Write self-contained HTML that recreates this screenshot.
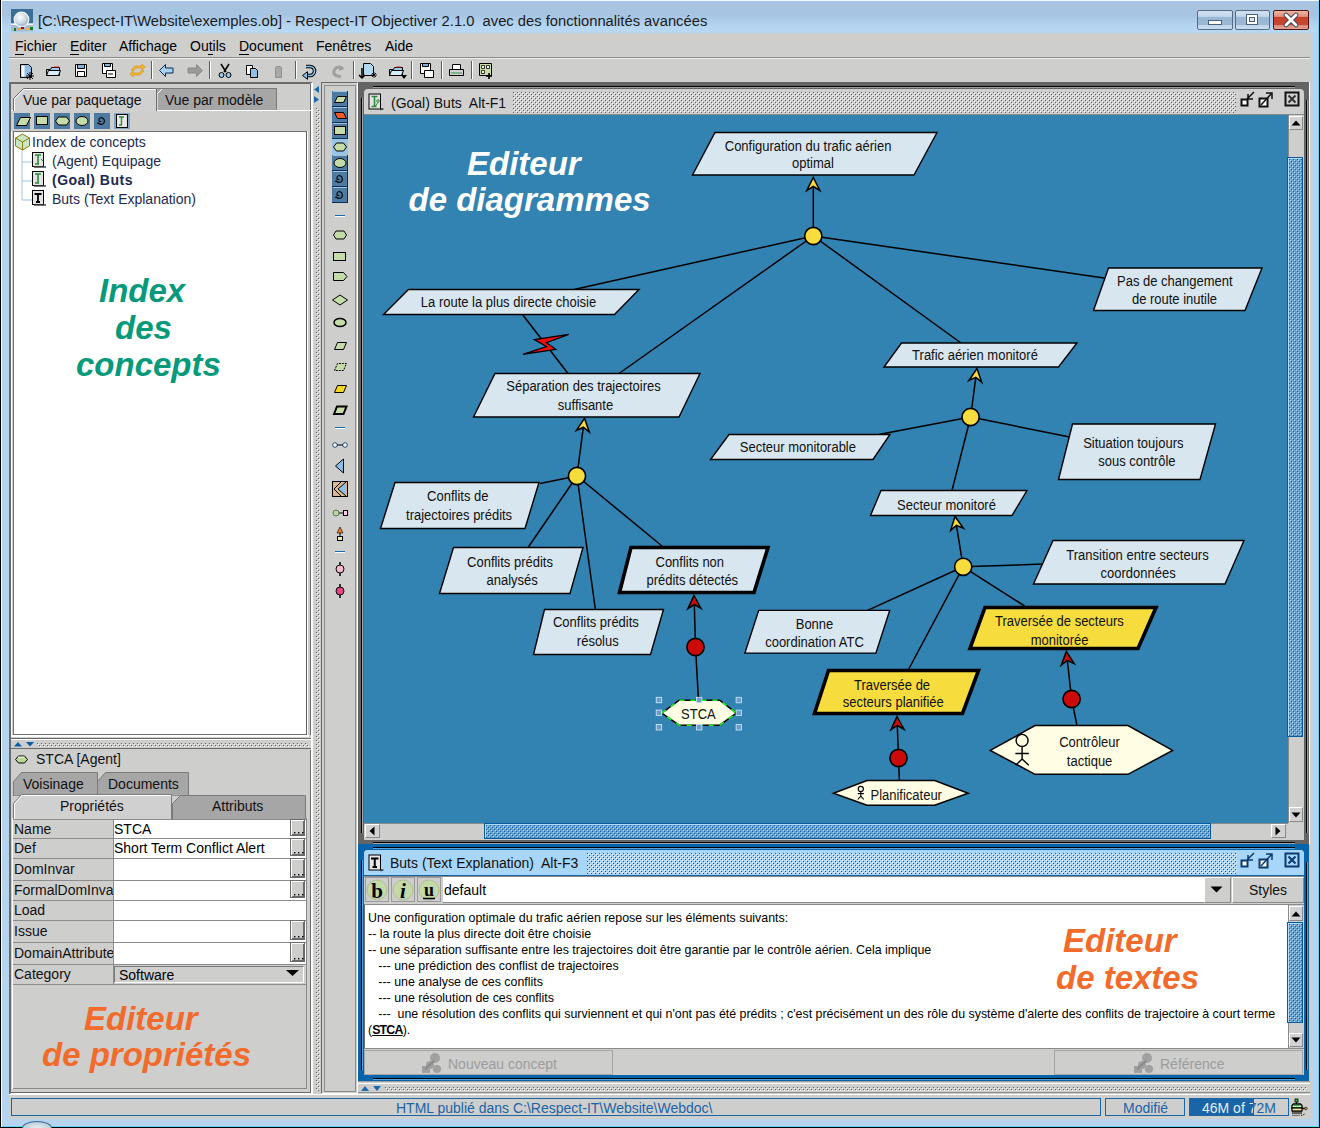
<!DOCTYPE html>
<html><head><meta charset="utf-8">
<style>
*{margin:0;padding:0;box-sizing:border-box}
html,body{width:1320px;height:1128px;overflow:hidden;background:#b6d4ee;font-family:"Liberation Sans",sans-serif;position:relative}
.a{position:absolute}
.t{position:absolute;white-space:pre;line-height:1}
.gray{background:#cececd}
</style></head><body>
<svg width="0" height="0" style="position:absolute"><defs>
<pattern id="gripG" width="4" height="4" patternUnits="userSpaceOnUse"><rect x="0" y="0" width="1" height="1" fill="#5c5c5c"/><rect x="2" y="2" width="1" height="1" fill="#5c5c5c"/><rect x="1" y="1" width="1" height="1" fill="#fff"/><rect x="3" y="3" width="1" height="1" fill="#fff"/></pattern>
<pattern id="gripB" width="4" height="4" patternUnits="userSpaceOnUse"><rect x="0" y="0" width="1" height="1" fill="#0c5aa4"/><rect x="2" y="2" width="1" height="1" fill="#0c5aa4"/><rect x="1" y="1" width="1" height="1" fill="#fff"/><rect x="3" y="3" width="1" height="1" fill="#fff"/></pattern>
<pattern id="thumb" width="4" height="4" patternUnits="userSpaceOnUse"><rect width="4" height="4" fill="#6aa2d2"/><rect x="0" y="0" width="1" height="1" fill="#0a5aa0"/><rect x="2" y="2" width="1" height="1" fill="#0a5aa0"/><rect x="1" y="1" width="1" height="1" fill="#b4dcff"/><rect x="3" y="3" width="1" height="1" fill="#b4dcff"/></pattern>
</defs></svg>
<!-- window frame -->
<div class="a" style="left:0;top:0;width:1320px;height:1128px;background:#b6d4ee"></div>
<div class="a" style="left:0;top:0;width:1320px;height:32px;background:linear-gradient(#a9c4e0,#a6c4e2 45%,#b4d4f0 80%,#b8d8f4)"></div>
<div class="a" style="left:0;top:0;width:1320px;height:1px;background:#f4f8fc"></div>
<div class="a" style="left:0;top:0;width:1px;height:1128px;background:#000"></div>
<div class="a" style="left:1px;top:1px;width:1px;height:1126px;background:#fff"></div>
<div class="a" style="left:1319px;top:0;width:1px;height:1128px;background:#000"></div>
<div class="a" style="left:1318px;top:1px;width:1px;height:1126px;background:#5cd8ff"></div>
<div class="a" style="left:0;top:1127px;width:1320px;height:1px;background:#000"></div>
<div class="a" style="left:2px;top:1126px;width:1316px;height:1px;background:#5cd8ff"></div>
<div class="a" style="left:22px;top:1121px;width:30px;height:14px;border-radius:50%;background:radial-gradient(#e8f0f4,#a8c0d0);border:1px solid #3a6a98"></div>
<!-- title -->
<svg class="a" style="left:10px;top:8px" width="25" height="25">
 <rect x="1" y="1" width="22" height="14.5" fill="#3a6e96"/>
 <rect x="1" y="15.5" width="22" height="1.5" fill="#f0f8ff"/>
 <rect x="1" y="17" width="22" height="6.5" fill="#a8bcd0"/>
 <defs><radialGradient id="glb" cx="40%" cy="35%" r="70%"><stop offset="0" stop-color="#fff"/><stop offset=".6" stop-color="#c8d6e4"/><stop offset="1" stop-color="#8aa4bc"/></radialGradient></defs>
 <circle cx="11.5" cy="11.5" r="7.3" fill="url(#glb)" stroke="#f4f8fc" stroke-width="1.2"/>
 <rect x="7" y="20" width="4" height="2" fill="#f0a050"/><rect x="11" y="19" width="3" height="2" fill="#901020"/><rect x="15" y="20" width="5" height="2" fill="#f0b060"/><rect x="20" y="19" width="3" height="3" fill="#108020"/><rect x="4" y="20" width="2" height="3" fill="#108020"/>
</svg>
<div class="t" style="left:38px;top:14px;font-size:14.75px;color:#1b1b1b">[C:\Respect-IT\Website\exemples.ob] - Respect-IT Objectiver 2.1.0  avec des fonctionnalités avancées</div>
<!-- window buttons -->
<div class="a" style="left:1197px;top:10px;width:36px;height:20px;border:1px solid #5a6a80;border-radius:2px;background:linear-gradient(#cfe0f0,#c4d8ec 30%,#9ab8d4 35%,#9ab8d4 75%,#c0d6ec 80%,#c8dcf0)"></div>
<div class="a" style="left:1208px;top:20px;width:14px;height:5px;background:#fff;border:1px solid #4a5f78"></div>
<div class="a" style="left:1235px;top:10px;width:35px;height:20px;border:1px solid #5a6a80;border-radius:2px;background:linear-gradient(#cfe0f0,#c4d8ec 30%,#9ab8d4 35%,#9ab8d4 75%,#c0d6ec 80%,#c8dcf0)"></div>
<div class="a" style="left:1246px;top:14px;width:12px;height:11px;background:#fff;border:1px solid #4a5f78"></div>
<div class="a" style="left:1249px;top:17px;width:6px;height:5px;border:1px solid #4a5f78;background:#d8e4ee"></div>
<div class="a" style="left:1273px;top:10px;width:36px;height:20px;border:1px solid #4a1810;border-radius:2px;background:linear-gradient(#f0b4a4,#e09080 30%,#c8402c 35%,#c84830 75%,#dc8c7c 80%,#e8a090)"></div>
<svg class="a" style="left:1282px;top:12px" width="18" height="16"><path d="M4 3l10 10M14 3L4 13" stroke="#3a4a5a" stroke-width="4.6" stroke-linecap="round"/><path d="M4 3l10 10M14 3L4 13" stroke="#fff" stroke-width="2.8" stroke-linecap="round"/></svg>

<!-- content gray -->
<div class="a gray" style="left:9px;top:33px;width:1302px;height:1086px"></div>

<!-- menu bar -->
<div class="t" style="left:15px;top:39px;font-size:14px;color:#000">Fichier</div>
<div class="a" style="left:15px;top:54px;width:9px;height:1px;background:#000"></div>
<div class="t" style="left:70px;top:39px;font-size:14px;color:#000">Editer</div>
<div class="a" style="left:70px;top:54px;width:9px;height:1px;background:#000"></div>
<div class="t" style="left:119px;top:39px;font-size:14px;color:#000">Affichage</div>
<div class="t" style="left:190px;top:39px;font-size:14px;color:#000">Outils</div>
<div class="a" style="left:208px;top:54px;width:5px;height:1px;background:#000"></div>
<div class="t" style="left:239px;top:39px;font-size:14px;color:#000">Document</div>
<div class="a" style="left:239px;top:54px;width:10px;height:1px;background:#000"></div>
<div class="t" style="left:316px;top:39px;font-size:14px;color:#000">Fenêtres</div>
<div class="t" style="left:385px;top:39px;font-size:14px;color:#000">Aide</div>
<div class="a" style="left:9px;top:57px;width:1301px;height:1px;background:#8c8c8c"></div>
<div class="a" style="left:9px;top:58px;width:1301px;height:1px;background:#ececec"></div>
<!-- toolbar separators -->
<div class="a" style="left:151px;top:61px;width:1px;height:18px;background:#1f6fb0"></div><div class="a" style="left:152px;top:61px;width:1px;height:18px;background:#fff"></div>
<div class="a" style="left:209px;top:61px;width:1px;height:18px;background:#1f6fb0"></div><div class="a" style="left:210px;top:61px;width:1px;height:18px;background:#fff"></div>
<div class="a" style="left:295px;top:61px;width:1px;height:18px;background:#1f6fb0"></div><div class="a" style="left:296px;top:61px;width:1px;height:18px;background:#fff"></div>
<div class="a" style="left:353px;top:61px;width:1px;height:18px;background:#1f6fb0"></div><div class="a" style="left:354px;top:61px;width:1px;height:18px;background:#fff"></div>
<div class="a" style="left:411px;top:61px;width:1px;height:18px;background:#1f6fb0"></div><div class="a" style="left:412px;top:61px;width:1px;height:18px;background:#fff"></div>
<div class="a" style="left:441px;top:61px;width:1px;height:18px;background:#1f6fb0"></div><div class="a" style="left:442px;top:61px;width:1px;height:18px;background:#fff"></div>
<div class="a" style="left:471px;top:61px;width:1px;height:18px;background:#1f6fb0"></div><div class="a" style="left:472px;top:61px;width:1px;height:18px;background:#fff"></div>
<!-- toolbar icons -->
<svg class="a" style="left:0;top:58px" width="500" height="24" viewBox="0 58 500 24">
 <!-- new -->
 <path d="M20.5 64.5h8l3 3v10h-11z" fill="#8fc0ea" stroke="#000"/>
 <path d="M21.5 65.5h3v11h-3z" fill="#fff"/>
 <path d="M27 73l6 6M33 73l-6 6M30 72v8M26 76h8" stroke="#000" stroke-width="1"/>
 <!-- open -->
 <path d="M46.5 69.5h4l1-2h8v8h-13z" fill="#9ccbee" stroke="#000"/>
 <path d="M46.5 75.5l2-5h12l-2 5z" fill="#d8ecfa" stroke="#000"/>
 <path d="M54 67h5" stroke="#d02020"/>
 <!-- save -->
 <path d="M75.5 64.5h11v12h-11z" fill="#fff" stroke="#000"/>
 <path d="M77.5 64.5h7v4h-7z" fill="#7fb6e6" stroke="#000"/>
 <path d="M77.5 71.5h7v5h-7z" fill="#fff" stroke="#000"/>
 <!-- save all -->
 <path d="M102.5 63.5h10v10h-10z" fill="#fff" stroke="#000"/>
 <path d="M104.5 63.5h6v3h-6z" fill="#7fb6e6" stroke="#000"/>
 <path d="M106.5 70.5h9v7h-9z" fill="#fff" stroke="#000"/>
 <path d="M108 74h5" stroke="#000"/>
 <!-- sync -->
 <path d="M131 70l4-4h7v-2l3 3-3 3v-2h-6l-3 3z" fill="#f2b640" stroke="#d69a20" stroke-width=".8"/>
 <path d="M144 71l-4 4h-7v2l-3-3 3-3v2h6l3-3z" fill="#f2b640" stroke="#d69a20" stroke-width=".8"/>
 <!-- back -->
 <path d="M159.5 70.5l6-6v3.5h7.5v5h-7.5v3.5z" fill="#a8d2f2" stroke="#0a2a50"/>
 <!-- forward gray -->
 <path d="M202.5 70.5l-6-6v3.5h-8.5v5h8.5v3.5z" fill="#9a9a9a" stroke="#8a8a8a"/>
 <!-- cut -->
 <path d="M221 64l5 8M229 64l-5 8" stroke="#000" stroke-width="1.5"/>
 <circle cx="221.5" cy="75" r="2.5" fill="#9cc8ee" stroke="#000"/>
 <circle cx="228.5" cy="75" r="2.5" fill="#9cc8ee" stroke="#000"/>
 <!-- copy -->
 <path d="M246.5 65.5h6v9h-6z" fill="#fff" stroke="#000"/>
 <path d="M250.5 68.5h5l2 2v7h-7z" fill="#8fc0ea" stroke="#000"/>
 <!-- paste gray -->
 <path d="M276.5 66.5h4l1 1v10h-6v-10z" fill="#a8a8a8" stroke="#909090"/>
 <!-- undo -->
 <path d="M306 66.5h4a4.5 4.5 0 0 1 0 9h-3" fill="none" stroke="#000" stroke-width="3.6"/>
 <path d="M306 66.5h4a4.5 4.5 0 0 1 0 9h-3" fill="none" stroke="#8cc4f0" stroke-width="1.6"/>
 <path d="M302.5 75.5l5-3.8v7.6z" fill="#8cc4f0" stroke="#000" stroke-width="1"/>
 <!-- redo gray -->
 <path d="M343 69c-3-3-8-2-9 2s3 6 7 5" fill="none" stroke="#a0a0a0" stroke-width="3"/>
 <path d="M339 65l5 4-5 2z" fill="#a0a0a0"/>
 <!-- import -->
 <path d="M363.5 63.5h7l3 3v9h-10z" fill="#b0d8f0" stroke="#000"/>
 <path d="M362 68v10M359 75l3 3 3-3" stroke="#000" stroke-width="1.5" fill="none"/>
 <path d="M372 73l4 4M376 73l-4 4M374 72v6M371 75h6" stroke="#000" stroke-width=".8"/>
 <!-- export -->
 <path d="M389.5 69.5h4l1-2h8v8h-13z" fill="#9ccbee" stroke="#000"/>
 <path d="M389.5 75.5l2-5h12l-2 5z" fill="#d8ecfa" stroke="#000"/>
 <path d="M396 67h5" stroke="#d02020"/>
 <path d="M401 75l3 4 3-4z" fill="#000"/>
 <!-- save doc -->
 <path d="M420.5 63.5h10v10h-10z" fill="#fff" stroke="#000"/>
 <path d="M422.5 63.5h6v3h-6z" fill="#7fb6e6" stroke="#000"/>
 <path d="M424.5 70.5h9v7h-9z" fill="#fff" stroke="#000"/>
 <!-- print -->
 <path d="M452.5 64.5h8v5h-8z" fill="#fff" stroke="#000"/>
 <path d="M449.5 69.5h14v6h-14z" fill="#d2d2d2" stroke="#000"/>
 <path d="M451 73h11" stroke="#309040"/>
 <!-- graph -->
 <path d="M479.5 63.5h12v12h-12z" fill="#c8e0a8" stroke="#000"/>
 <path d="M481.5 65.5h3v3h-3zM486.5 65.5h3v3h-3zM481.5 70.5h3v3h-3z" fill="#fff" stroke="#000" stroke-width=".8"/>
 <path d="M489 73v6M486 76h6" stroke="#000" stroke-width="1.6"/>
</svg>

<!-- ===== LEFT PANEL ===== -->
<div class="a" style="left:9px;top:82px;width:304px;height:1013px;border-top:2px solid #6a6a6a;border-left:2px solid #6a6a6a;border-right:3px solid #fff;border-bottom:2px solid #fff"></div>
<div class="a" style="left:11px;top:84px;width:300px;height:1009px;border-right:1px solid #6a6a6a;border-bottom:1px solid #6a6a6a"></div>
<!-- tabs -->
<div class="a" style="left:11px;top:110px;width:300px;height:1px;background:#fff"></div>
<div class="a" style="left:157px;top:88px;width:120px;height:22px;background:#a6a6a6;border-top:1px solid #7a7a7a;border-right:1px solid #7a7a7a"></div>
<svg class="a" style="left:150px;top:88px" width="12" height="23"><path d="M7 22V6l6-6" fill="none" stroke="#fff"/></svg>
<div class="t" style="left:165px;top:93px;font-size:14px;color:#111">Vue par modèle</div>
<svg class="a" style="left:13px;top:88px" width="146" height="23"><path d="M0.5 23V10.5L10.5 0.5H143.5V23" fill="#d0d0d0" stroke="#6e6e6e"/><path d="M1.5 23V11L11 1.5H143" fill="none" stroke="#fff"/></svg>
<div class="t" style="left:23px;top:93px;font-size:14px;color:#111">Vue par paquetage</div>
<!-- icon strip -->
<svg class="a" style="left:13px;top:112px" width="120" height="18">
 <rect x="1" y="1" width="16" height="16" fill="#4d7aa0"/>
 <path d="M3.5 13.5l4-8h10l-4 8z" fill="#c4dca8" stroke="#000"/>
 <rect x="21" y="1" width="16" height="16" fill="#4d7aa0"/>
 <rect x="23.5" y="4.5" width="11" height="8" fill="#c4dca8" stroke="#000"/>
 <rect x="41" y="1" width="16" height="16" fill="#4d7aa0"/>
 <path d="M42.5 9l3-4h8l3 4-3 4h-8z" fill="#c4dca8" stroke="#000"/>
 <rect x="61" y="1" width="16" height="16" fill="#4d7aa0"/>
 <ellipse cx="69" cy="9" rx="6" ry="4.5" fill="#c4dca8" stroke="#000"/>
 <rect x="81" y="1" width="16" height="16" fill="#4d7aa0"/>
 <path d="M84.2 11.5l1.3-.6c1 1.6 3.3 2 4.8.7 1.6-1.4 1.4-4.4-.6-5.6-1.7-1-3.8 0-3.8 2 0 1.3 1.5 2 2.4 1.2" fill="none" stroke="#000" stroke-width="1.1"/>
 <rect x="101" y="1" width="16" height="16" fill="#7fa4c4"/>
 <rect x="103.5" y="2.5" width="11" height="13" fill="#e8e8e8" stroke="#000"/>
 <path d="M106 5h5M108.5 5v8M106 13h3" stroke="#2c8a3a" stroke-width="1.4"/>
</svg>
<!-- tree -->
<div class="a" style="left:13px;top:131px;width:295px;height:604px;background:#fff;border:1px solid #707070;border-right-color:#9a9a9a;border-bottom-color:#707070"></div>
<div class="a" style="left:306px;top:131px;width:1px;height:604px;background:#606060"></div><div class="a" style="left:307px;top:131px;width:1px;height:606px;background:#fff"></div>
<svg class="a" style="left:14px;top:132px" width="40" height="80">
 <path d="M1.5 6l7-4 7 4v8l-7 4-7-4z" fill="#c8e8c0" stroke="#8a7a10"/>
 <path d="M1.5 6l7 4 7-4M8.5 10v8" fill="none" stroke="#8a7a10"/>
 <path d="M8 19v49M8 30h10M8 49h10M8 68h10" stroke="#9cc4e4" stroke-width="1"/>
</svg>
<svg class="a" style="left:32px;top:150px" width="22" height="60">
 <rect x="0.5" y="2.5" width="11" height="14" fill="#e4e4e4" stroke="#000"/><path d="M3 5h6M6 5v9M3 14h4" stroke="#2c8a3a" stroke-width="1.6"/><path d="M9 9l2 2" stroke="#2c8a3a"/><path d="M2 17h12" stroke="#444" stroke-width="1.5"/>
 <rect x="0.5" y="21.5" width="11" height="14" fill="#e4e4e4" stroke="#000"/><path d="M3 24h6M6 24v9M3 33h4" stroke="#2c8a3a" stroke-width="1.6"/><path d="M2 36h12" stroke="#444" stroke-width="1.5"/>
 <rect x="0.5" y="40.5" width="11" height="14" fill="#e4e4e4" stroke="#000"/><path d="M2.5 44h7M6 44v8M4 52h4" stroke="#000" stroke-width="1.8"/><path d="M2 55h12" stroke="#444" stroke-width="1.5"/>
</svg>
<div class="t" style="left:32px;top:135px;font-size:14px;color:#1c2a50">Index de concepts</div>
<div class="t" style="left:52px;top:154px;font-size:14px;color:#1c2a50">(Agent) Equipage</div>
<div class="t" style="left:52px;top:173px;font-size:14px;color:#1c2a50;font-weight:bold;letter-spacing:0.5px">(Goal) Buts</div>
<div class="t" style="left:52px;top:192px;font-size:14px;color:#1c2a50">Buts (Text Explanation)</div>
<svg class="a" style="left:0;top:260px" width="300" height="140"><g font-family="Liberation Sans" font-size="33" font-weight="bold" font-style="italic" fill="#079a7a"><text x="99" y="41.8">Index</text><text x="115" y="78.6">des</text><text x="76" y="115.5">concepts</text></g></svg>
<!-- splitter left-bottom -->
<div class="a" style="left:11px;top:735px;width:300px;height:15px;background:#cececd"></div>
<div class="a" style="left:12px;top:735px;width:297px;height:2px;background:#fff"></div>
<div class="a" style="left:11px;top:738px;width:300px;height:1px;background:#6a6a6a"></div>
<div class="a" style="left:11px;top:739px;width:300px;height:1px;background:#fff"></div>
<div class="a" style="left:11px;top:748px;width:300px;height:1px;background:#6a6a6a"></div>
<svg class="a" style="left:37px;top:743px" width="272" height="4"><rect width="272" height="4" fill="url(#gripG)"/></svg>
<svg class="a" style="left:13px;top:740px" width="24" height="9"><path d="M1 6.5l4-4.5 4 4.5z" fill="#0a5ca4"/><path d="M13 2l4 4.5 4-4.5z" fill="#0a5ca4"/></svg>
<div class="a" style="left:11px;top:131px;width:1px;height:606px;background:#fff"></div>

<!-- ===== PROPERTIES ===== -->
<svg class="a" style="left:14px;top:754px" width="16" height="12"><path d="M1.5 5.5l3-3.5h6l3 3.5-3 3.5h-6z" fill="#b8d898" stroke="#000"/><path d="M4 3.2h6.5" stroke="#fff"/></svg>
<div class="t" style="left:36px;top:752px;font-size:14px;color:#111">STCA [Agent]</div>
<!-- tab row 1 -->
<svg class="a" style="left:13px;top:772px" width="180" height="24">
 <path d="M0.5 24V9.5L8.5 0.5H84.5V24z" fill="#a6a6a6" stroke="#7a7a7a"/>
 <path d="M84.5 24V9.5L92.5 0.5H175.5V24z" fill="#a6a6a6" stroke="#7a7a7a"/>
</svg>
<div class="t" style="left:23px;top:777px;font-size:14px;color:#111">Voisinage</div>
<div class="t" style="left:108px;top:777px;font-size:14px;color:#111">Documents</div>
<!-- tab row 2 -->
<svg class="a" style="left:13px;top:794px" width="296" height="25">
 <path d="M159.5 25V9.5L167.5 1.5H292.5V25" fill="#a6a6a6" stroke="#7a7a7a"/>
 <path d="M0.5 25V9.5L8.5 0.5H158.5V25" fill="#d0d0d0" stroke="#7a7a7a"/>
 <path d="M1.5 25V10L9 1.5H158" fill="none" stroke="#fff"/>
</svg>
<div class="t" style="left:60px;top:799px;font-size:14px;color:#111">Propriétés</div>
<div class="t" style="left:212px;top:799px;font-size:14px;color:#111">Attributs</div>
<div class="a" style="left:13px;top:819px;width:294px;height:1px;background:#8c8c8c"></div>
<div class="a" style="left:13px;top:820px;width:100px;height:18px;overflow:hidden"><div class="t" style="left:1px;top:1.5px;font-size:14px;color:#111">Name</div></div>
<div class="a" style="left:114px;top:820px;width:192px;height:18px;background:#fff"></div>
<div class="t" style="left:114px;top:821.5px;font-size:14px;color:#000">STCA</div>
<svg class="a" style="left:290px;top:819px" width="16" height="18"><rect x="0" y="0" width="15" height="17" fill="#6a6a6a"/><rect x="1" y="1" width="13" height="15" fill="#fff"/><rect x="2" y="2" width="12" height="14" fill="#cececd"/><path d="M2 15.5h12M13.5 2v14" stroke="#6a6a6a" stroke-width="1"/><rect x="4" y="13" width="1.4" height="1.4" fill="#000"/><rect x="8" y="13" width="1.4" height="1.4" fill="#000"/><rect x="12" y="13" width="1.4" height="1.4" fill="#000"/></svg>
<div class="a" style="left:13px;top:838px;width:294px;height:1px;background:#8c8c8c"></div>
<div class="a" style="left:13px;top:839px;width:100px;height:19px;overflow:hidden"><div class="t" style="left:1px;top:2.0px;font-size:14px;color:#111">Def</div></div>
<div class="a" style="left:114px;top:839px;width:192px;height:19px;background:#fff"></div>
<div class="t" style="left:114px;top:841.0px;font-size:14px;color:#000">Short Term Conflict Alert</div>
<svg class="a" style="left:290px;top:838px" width="16" height="19"><rect x="0" y="0" width="15" height="18" fill="#6a6a6a"/><rect x="1" y="1" width="13" height="16" fill="#fff"/><rect x="2" y="2" width="12" height="15" fill="#cececd"/><path d="M2 16.5h12M13.5 2v15" stroke="#6a6a6a" stroke-width="1"/><rect x="4" y="14" width="1.4" height="1.4" fill="#000"/><rect x="8" y="14" width="1.4" height="1.4" fill="#000"/><rect x="12" y="14" width="1.4" height="1.4" fill="#000"/></svg>
<div class="a" style="left:13px;top:858px;width:294px;height:1px;background:#8c8c8c"></div>
<div class="a" style="left:13px;top:859px;width:100px;height:21px;overflow:hidden"><div class="t" style="left:1px;top:3.0px;font-size:14px;color:#111">DomInvar</div></div>
<div class="a" style="left:114px;top:859px;width:192px;height:21px;background:#fff"></div>
<svg class="a" style="left:290px;top:858px" width="16" height="21"><rect x="0" y="0" width="15" height="20" fill="#6a6a6a"/><rect x="1" y="1" width="13" height="18" fill="#fff"/><rect x="2" y="2" width="12" height="17" fill="#cececd"/><path d="M2 18.5h12M13.5 2v17" stroke="#6a6a6a" stroke-width="1"/><rect x="4" y="16" width="1.4" height="1.4" fill="#000"/><rect x="8" y="16" width="1.4" height="1.4" fill="#000"/><rect x="12" y="16" width="1.4" height="1.4" fill="#000"/></svg>
<div class="a" style="left:13px;top:880px;width:294px;height:1px;background:#8c8c8c"></div>
<div class="a" style="left:13px;top:881px;width:100px;height:19px;overflow:hidden"><div class="t" style="left:1px;top:2.0px;font-size:14px;color:#111">FormalDomInva</div></div>
<div class="a" style="left:114px;top:881px;width:192px;height:19px;background:#fff"></div>
<svg class="a" style="left:290px;top:880px" width="16" height="19"><rect x="0" y="0" width="15" height="18" fill="#6a6a6a"/><rect x="1" y="1" width="13" height="16" fill="#fff"/><rect x="2" y="2" width="12" height="15" fill="#cececd"/><path d="M2 16.5h12M13.5 2v15" stroke="#6a6a6a" stroke-width="1"/><rect x="4" y="14" width="1.4" height="1.4" fill="#000"/><rect x="8" y="14" width="1.4" height="1.4" fill="#000"/><rect x="12" y="14" width="1.4" height="1.4" fill="#000"/></svg>
<div class="a" style="left:13px;top:900px;width:294px;height:1px;background:#8c8c8c"></div>
<div class="a" style="left:13px;top:901px;width:100px;height:19px;overflow:hidden"><div class="t" style="left:1px;top:2.0px;font-size:14px;color:#111">Load</div></div>
<div class="a" style="left:114px;top:901px;width:192px;height:19px;background:#fff"></div>
<div class="a" style="left:13px;top:920px;width:294px;height:1px;background:#8c8c8c"></div>
<div class="a" style="left:13px;top:921px;width:100px;height:21px;overflow:hidden"><div class="t" style="left:1px;top:3.0px;font-size:14px;color:#111">Issue</div></div>
<div class="a" style="left:114px;top:921px;width:192px;height:21px;background:#fff"></div>
<svg class="a" style="left:290px;top:920px" width="16" height="21"><rect x="0" y="0" width="15" height="20" fill="#6a6a6a"/><rect x="1" y="1" width="13" height="18" fill="#fff"/><rect x="2" y="2" width="12" height="17" fill="#cececd"/><path d="M2 18.5h12M13.5 2v17" stroke="#6a6a6a" stroke-width="1"/><rect x="4" y="16" width="1.4" height="1.4" fill="#000"/><rect x="8" y="16" width="1.4" height="1.4" fill="#000"/><rect x="12" y="16" width="1.4" height="1.4" fill="#000"/></svg>
<div class="a" style="left:13px;top:942px;width:294px;height:1px;background:#8c8c8c"></div>
<div class="a" style="left:13px;top:943px;width:100px;height:21px;overflow:hidden"><div class="t" style="left:1px;top:3.0px;font-size:14px;color:#111">DomainAttribute</div></div>
<div class="a" style="left:114px;top:943px;width:192px;height:21px;background:#fff"></div>
<svg class="a" style="left:290px;top:942px" width="16" height="21"><rect x="0" y="0" width="15" height="20" fill="#6a6a6a"/><rect x="1" y="1" width="13" height="18" fill="#fff"/><rect x="2" y="2" width="12" height="17" fill="#cececd"/><path d="M2 18.5h12M13.5 2v17" stroke="#6a6a6a" stroke-width="1"/><rect x="4" y="16" width="1.4" height="1.4" fill="#000"/><rect x="8" y="16" width="1.4" height="1.4" fill="#000"/><rect x="12" y="16" width="1.4" height="1.4" fill="#000"/></svg>
<div class="a" style="left:13px;top:964px;width:294px;height:1px;background:#8c8c8c"></div>
<div class="a" style="left:13px;top:965px;width:100px;height:19px;overflow:hidden"><div class="t" style="left:1px;top:2.0px;font-size:14px;color:#111">Category</div></div>
<div class="a" style="left:13px;top:984px;width:294px;height:1px;background:#8c8c8c"></div>
<div class="a" style="left:113px;top:819px;width:1px;height:166px;background:#8c8c8c"></div>
<div class="a" style="left:114px;top:966px;width:190px;height:17px;background:#cececd;border:1px solid #7a7a7a;border-right-color:#fff;border-bottom-color:#fff"></div>
<div class="t" style="left:119px;top:968px;font-size:14px;color:#000">Software</div>
<svg class="a" style="left:286px;top:969px" width="14" height="8"><path d="M0 1h13l-6.5 6z" fill="#000"/></svg>
<div class="a" style="left:306px;top:818px;width:1px;height:271px;background:#8a8a8a"></div>
<div class="a" style="left:13px;top:1088px;width:294px;height:1px;background:#8a8a8a"></div>
<div class="a" style="left:12px;top:818px;width:1px;height:271px;background:#fff"></div>
<svg class="a" style="left:0;top:990px" width="300" height="90"><g font-family="Liberation Sans" font-size="33" font-weight="bold" font-style="italic" fill="#f26b2b"><text x="84" y="39.8">Editeur</text><text x="42" y="76.4">de propriétés</text></g></svg>

<!-- ===== splitter left ===== -->
<svg class="a" style="left:316px;top:108px" width="4" height="983"><rect width="4" height="983" fill="url(#gripG)"/></svg>
<svg class="a" style="left:312px;top:85px" width="9" height="20"><path d="M7 1v7l-5-3.5z" fill="#1a6ab0"/><path d="M2 11v7l5-3.5z" fill="#1a6ab0"/></svg>
<!-- ===== palette ===== -->
<div class="a" style="left:321px;top:82px;width:37px;height:1012px;border:1px solid #6a6a6a;border-right-color:#fff;border-bottom-color:#fff"></div>
<div class="a" style="left:324px;top:85px;width:32px;height:1007px;border:1px solid #8c8c8c"></div>

<svg class="a" style="left:324px;top:86px" width="32" height="520">
 <g transform="translate(-324,-86)">
 <rect x="332" y="91" width="16" height="112" fill="#4d7aa0"/>
 <path d="M332 106.5h16M332 122.5h16M332 138.5h16M332 154.5h16M332 170.5h16M332 186.5h16M332 202.5h16M347.5 91v112" stroke="#0e2e5a"/><path d="M333 91.5h14M333 107.5h14M333 123.5h14M333 155.5h14M333 171.5h14M333 187.5h14" stroke="#b8d4ec" stroke-width=".8"/>
 <rect x="332" y="139" width="16" height="16" fill="#9cc4e4"/>
 <path d="M334.5 102.5l3-6h9l-3 6z" fill="#c4dca8" stroke="#000"/>
 <path d="M334.5 112.5l9 0 3 6h-9z" fill="#f05a28" stroke="#000"/>
 <rect x="334.5" y="126.5" width="11" height="8" fill="#c4dca8" stroke="#000"/>
 <path d="M333.5 147l3-4h7l3 4-3 4h-7z" fill="#c4dca8" stroke="#000"/>
 <ellipse cx="340" cy="163" rx="6" ry="4.5" fill="#c4dca8" stroke="#000"/>
 <path d="M335.2 181.5l1.3-.6c1 1.6 3.3 2 4.8.7 1.6-1.4 1.4-4.4-.6-5.6-1.7-1-3.8 0-3.8 2 0 1.3 1.5 2 2.4 1.2" fill="none" stroke="#000" stroke-width="1.1"/>
 <path d="M335.2 197.5l1.3-.6c1 1.6 3.3 2 4.8.7 1.6-1.4 1.4-4.4-.6-5.6-1.7-1-3.8 0-3.8 2 0 1.3 1.5 2 2.4 1.2" fill="none" stroke="#000" stroke-width="1.1"/>
 <path d="M335 215.5h10" stroke="#1a6ab0"/><path d="M335 216.5h10" stroke="#fff"/>
 <path d="M333.5 235l2.5-4h8l2.5 4-2.5 4h-8z" fill="#c4dca8" stroke="#000"/>
 <rect x="333.5" y="252.5" width="12" height="8" fill="#c4dca8" stroke="#000"/>
 <path d="M333.5 272.5h10l3.5 4-3.5 4h-10z" fill="#c4dca8" stroke="#000"/>
 <path d="M332.5 300l7.5-5 7.5 5-7.5 5z" fill="#c4dca8" stroke="#000"/>
 <ellipse cx="340" cy="322.5" rx="6" ry="4" fill="#c4dca8" stroke="#000" stroke-width="1.5"/>
 <path d="M334.5 349.5l3-7h9l-3 7z" fill="#c4dca8" stroke="#000"/>
 <path d="M334.5 370.5l3-7h9l-3 7z" fill="#c4dca8" stroke="#000" stroke-dasharray="2 1"/>
 <path d="M334.5 392.5l3-7h9l-3 7z" fill="#f2d820" stroke="#000"/>
 <path d="M334 414l3-7.5h9.5l-3 7.5z" fill="#c4dca8" stroke="#000" stroke-width="2"/>
 <path d="M335 427.5h10" stroke="#1a6ab0"/><path d="M335 428.5h10" stroke="#fff"/>
 <circle cx="335" cy="445" r="2.3" fill="#fff" stroke="#1a4a7a"/><circle cx="345" cy="445" r="2.3" fill="#fff" stroke="#1a4a7a"/><path d="M337 445h6" stroke="#000"/>
 <path d="M343.5 459v14l-8-7z" fill="#8cc0ec" stroke="#000"/>
 <rect x="332.5" y="481.5" width="15" height="15" fill="#d8b888" stroke="#000"/><path d="M346 482l-8 7 8 7" fill="#8cc0ec" stroke="#000"/><path d="M341 482l-7 7 7 7" fill="none" stroke="#000"/>
 <circle cx="336" cy="513" r="3" fill="#b8d898" stroke="#5a7a5a"/><path d="M339 513h4" stroke="#000"/><rect x="343.5" y="510.5" width="4" height="5" fill="#fce" stroke="#000"/>
 <path d="M340 527l-3 6h6z" fill="#f07a20" stroke="#000" stroke-width=".6"/><path d="M340 533v3" stroke="#000"/><rect x="337.5" y="536.5" width="5" height="4" fill="#f8e8a0" stroke="#000"/>
 <path d="M335 551.5h10" stroke="#1a6ab0"/><path d="M335 552.5h10" stroke="#fff"/>
 <path d="M340 562v3M340 573v3" stroke="#000" stroke-width="1.5"/><circle cx="340" cy="569" r="4" fill="#f8b8d0" stroke="#000"/>
 <path d="M340 584v3M340 595v3" stroke="#000" stroke-width="1.5"/><circle cx="340" cy="591" r="4" fill="#e84888" stroke="#000"/>
 </g>
</svg>

<!-- ===== DIAGRAM FRAME ===== -->
<div class="a" style="left:358px;top:82px;width:951px;height:763px;background:#646464"></div>
<div class="a" style="left:373px;top:86px;width:922px;height:1px;background:#000"></div>
<div class="a" style="left:373px;top:87px;width:922px;height:1px;background:#a0a0a0"></div>
<div class="a" style="left:361px;top:98px;width:1px;height:735px;background:#000"></div>
<div class="a" style="left:362px;top:98px;width:1px;height:735px;background:#a0a0a0"></div>
<div class="a" style="left:1306px;top:100px;width:1px;height:733px;background:#000"></div>
<div class="a" style="left:1307px;top:100px;width:1px;height:733px;background:#a0a0a0"></div>
<div class="a" style="left:373px;top:842px;width:922px;height:1px;background:#000"></div>
<div class="a" style="left:373px;top:843px;width:922px;height:1px;background:#a0a0a0"></div>
<div class="a" style="left:1309px;top:82px;width:1px;height:763px;background:#fff"></div>
<div class="a" style="left:364px;top:89px;width:940px;height:751px;background:#d0d0d0;border-radius:4px 4px 0 0"></div>
<svg class="a" style="left:513px;top:92px" width="723" height="21"><rect width="723" height="21" fill="url(#gripG)"/></svg>
<div class="a" style="left:364px;top:114px;width:940px;height:1px;background:#8a8a8a"></div>
<svg class="a" style="left:368px;top:93px" width="18" height="18">
 <rect x="1" y="1" width="11.5" height="15" fill="#e4e4e4" stroke="#000" stroke-width="1"/>
 <path d="M3.5 3.5h6M6.5 3.5v10M3.5 13.5h5" stroke="#2c8a3a" stroke-width="1.6"/><circle cx="10" cy="8" r="1.3" fill="none" stroke="#2c8a3a"/><path d="M10 9.5l-3 4" stroke="#2c8a3a"/>
 <path d="M12.5 15.5l3 0.5-3 .8" stroke="#444" stroke-width="1.2"/>
</svg>
<div class="t" style="left:391px;top:96px;font-size:14px;color:#111">(Goal) Buts  Alt-F1</div>
<svg class="a" style="left:1240px;top:91px" width="62" height="18">
 <rect x="1.5" y="8.5" width="6" height="6" fill="#fff" stroke="#111" stroke-width="2"/>
 <path d="M7 8l7-7M8 3v5h5" fill="none" stroke="#111" stroke-width="1.5"/>
 <rect x="19.5" y="7.5" width="8" height="8" fill="#fff" stroke="#111" stroke-width="2"/>
 <path d="M21 14l10-11M26 2h6v6" fill="none" stroke="#111" stroke-width="1.5"/>
 <rect x="45.5" y="1.5" width="13" height="13" fill="#d0d0d0" stroke="#111" stroke-width="2"/>
 <path d="M48.5 4.5l7 7M55.5 4.5l-7 7" stroke="#333" stroke-width="2"/>
</svg>
<!-- canvas -->
<div class="a" style="left:364px;top:115px;width:924px;height:708px;background:#3282b2"></div>
<!-- DIAGRAM START --><svg class="a" style="left:364px;top:115px" width="924" height="708" viewBox="364 115 924 708"><line x1="813.3" y1="236.0" x2="574.0" y2="289.5" stroke="#000" stroke-width="1.5"/>
<line x1="813.3" y1="236.0" x2="619.0" y2="373.5" stroke="#000" stroke-width="1.5"/>
<line x1="813.3" y1="236.0" x2="961.0" y2="343.0" stroke="#000" stroke-width="1.5"/>
<line x1="813.3" y1="236.0" x2="1104.0" y2="278.0" stroke="#000" stroke-width="1.5"/>
<line x1="522.5" y1="314.5" x2="568.0" y2="373.5" stroke="#000" stroke-width="1.5"/>
<line x1="577.0" y1="476.0" x2="540.0" y2="483.5" stroke="#000" stroke-width="1.5"/>
<line x1="577.0" y1="476.0" x2="528.4" y2="547.0" stroke="#000" stroke-width="1.5"/>
<line x1="577.0" y1="476.0" x2="595.3" y2="609.0" stroke="#000" stroke-width="1.5"/>
<line x1="577.0" y1="476.0" x2="662.0" y2="546.0" stroke="#000" stroke-width="1.5"/>
<line x1="695.5" y1="647.0" x2="698.5" y2="700.2" stroke="#000" stroke-width="1.5"/>
<line x1="970.6" y1="417.0" x2="878.8" y2="434.5" stroke="#000" stroke-width="1.5"/>
<line x1="970.6" y1="417.0" x2="1069.7" y2="437.0" stroke="#000" stroke-width="1.5"/>
<line x1="970.6" y1="417.0" x2="952.0" y2="490.5" stroke="#000" stroke-width="1.5"/>
<line x1="963.2" y1="566.8" x2="1043.0" y2="564.0" stroke="#000" stroke-width="1.5"/>
<line x1="963.2" y1="566.8" x2="867.6" y2="610.4" stroke="#000" stroke-width="1.5"/>
<line x1="963.2" y1="566.8" x2="1024.6" y2="606.0" stroke="#000" stroke-width="1.5"/>
<line x1="963.2" y1="566.8" x2="908.8" y2="669.0" stroke="#000" stroke-width="1.5"/>
<line x1="898.5" y1="758.0" x2="899.4" y2="780.6" stroke="#000" stroke-width="1.5"/>
<line x1="1071.6" y1="699.0" x2="1077.0" y2="725.6" stroke="#000" stroke-width="1.5"/>
<line x1="813.3" y1="236.0" x2="813.3" y2="186.5" stroke="#000" stroke-width="1.5"/>
<polygon points="813.3,177.5 819.8,190.5 813.3,186.5 806.8,190.5" fill="#f6dc3c" stroke="#000" stroke-width="1.5" stroke-linejoin="miter"/>
<line x1="577.0" y1="476.0" x2="583.3" y2="427.2" stroke="#000" stroke-width="1.5"/>
<polygon points="584.5,418.3 589.3,432.0 583.3,427.2 576.4,430.4" fill="#f6dc3c" stroke="#000" stroke-width="1.5" stroke-linejoin="miter"/>
<line x1="970.6" y1="417.0" x2="975.8" y2="377.4" stroke="#000" stroke-width="1.5"/>
<polygon points="977.0,368.5 981.7,382.2 975.8,377.4 968.9,380.5" fill="#f6dc3c" stroke="#000" stroke-width="1.5" stroke-linejoin="miter"/>
<line x1="963.2" y1="566.8" x2="956.4" y2="525.4" stroke="#000" stroke-width="1.5"/>
<polygon points="955.0,516.5 963.5,528.3 956.4,525.4 950.7,530.4" fill="#f6dc3c" stroke="#000" stroke-width="1.5" stroke-linejoin="miter"/>
<line x1="695.5" y1="647.0" x2="694.3" y2="604.5" stroke="#000" stroke-width="1.5"/>
<polygon points="694.0,595.5 700.9,608.3 694.3,604.5 687.9,608.7" fill="#cc0a0a" stroke="#000" stroke-width="1.5" stroke-linejoin="miter"/>
<line x1="898.5" y1="758.0" x2="897.3" y2="725.5" stroke="#000" stroke-width="1.5"/>
<polygon points="897.0,716.5 904.0,729.3 897.3,725.5 891.0,729.7" fill="#cc0a0a" stroke="#000" stroke-width="1.5" stroke-linejoin="miter"/>
<line x1="1071.6" y1="699.0" x2="1067.3" y2="660.4" stroke="#000" stroke-width="1.5"/>
<polygon points="1066.3,651.5 1074.2,663.7 1067.3,660.4 1061.3,665.1" fill="#cc0a0a" stroke="#000" stroke-width="1.5" stroke-linejoin="miter"/>
<polygon points="715.0,132.5 937.0,132.5 914.0,175.0 692.5,175.0" fill="#d7e6ef" stroke="#000" stroke-width="1.4" stroke-linejoin="miter"/>
<polygon points="408.5,289.5 639.0,289.5 614.5,314.5 383.5,314.5" fill="#d7e6ef" stroke="#000" stroke-width="1.4" stroke-linejoin="miter"/>
<polygon points="495.0,373.5 700.0,373.5 679.0,417.0 473.5,417.0" fill="#d7e6ef" stroke="#000" stroke-width="1.4" stroke-linejoin="miter"/>
<polygon points="1108.5,268.0 1262.0,268.0 1245.0,310.5 1093.5,310.5" fill="#d7e6ef" stroke="#000" stroke-width="1.4" stroke-linejoin="miter"/>
<polygon points="901.5,343.0 1077.0,343.0 1058.5,367.0 884.0,367.0" fill="#d7e6ef" stroke="#000" stroke-width="1.4" stroke-linejoin="miter"/>
<polygon points="729.0,434.5 890.0,434.5 873.0,459.5 710.5,459.5" fill="#d7e6ef" stroke="#000" stroke-width="1.4" stroke-linejoin="miter"/>
<polygon points="1072.5,424.0 1215.5,424.0 1200.0,479.5 1058.5,479.5" fill="#d7e6ef" stroke="#000" stroke-width="1.4" stroke-linejoin="miter"/>
<polygon points="881.0,490.5 1027.0,490.5 1012.0,515.5 870.5,515.5" fill="#d7e6ef" stroke="#000" stroke-width="1.4" stroke-linejoin="miter"/>
<polygon points="395.0,482.5 539.0,482.5 525.0,528.5 380.5,528.5" fill="#d7e6ef" stroke="#000" stroke-width="1.4" stroke-linejoin="miter"/>
<polygon points="453.5,547.5 583.0,547.5 570.0,593.5 439.5,593.5" fill="#d7e6ef" stroke="#000" stroke-width="1.4" stroke-linejoin="miter"/>
<polygon points="544.5,609.5 663.5,609.5 650.5,654.5 533.5,654.5" fill="#d7e6ef" stroke="#000" stroke-width="1.4" stroke-linejoin="miter"/>
<polygon points="631.0,547.5 768.0,547.5 754.0,592.5 619.5,592.5" fill="#d7e6ef" stroke="#000" stroke-width="3.6" stroke-linejoin="miter"/>
<polygon points="1053.0,540.5 1244.0,540.5 1225.0,584.0 1033.5,584.0" fill="#d7e6ef" stroke="#000" stroke-width="1.4" stroke-linejoin="miter"/>
<polygon points="758.7,610.4 889.7,610.4 875.9,653.1 744.9,653.1" fill="#d7e6ef" stroke="#000" stroke-width="1.4" stroke-linejoin="miter"/>
<polygon points="985.0,607.5 1156.0,607.5 1138.0,648.5 970.0,648.5" fill="#f6dc3c" stroke="#000" stroke-width="3.6" stroke-linejoin="miter"/>
<polygon points="828.5,670.5 978.5,670.5 962.5,713.5 814.5,713.5" fill="#f6dc3c" stroke="#000" stroke-width="3.6" stroke-linejoin="miter"/>
<polygon points="661.7,713.1 679.2,700.2 719.7,700.2 736.4,713.1 719.7,725.2 679.2,725.2" fill="#fffde4" stroke="#000" stroke-width="1.6"/>
<polygon points="661.7,713.1 679.2,700.2 719.7,700.2 736.4,713.1 719.7,725.2 679.2,725.2" fill="none" stroke="#22ee22" stroke-width="1.6" stroke-dasharray="5 6"/>
<polygon points="833.5,793.3 867.0,780.6 934.7,780.6 968.2,793.3 934.7,805.2 867.0,805.2" fill="#fffde4" stroke="#000" stroke-width="1.5"/>
<polygon points="990.3,750.4 1035.0,725.6 1128.0,725.6 1172.6,750.4 1128.0,774.3 1035.0,774.3" fill="#fffde4" stroke="#000" stroke-width="1.5"/>
<circle cx="813.3" cy="236" r="8.6" fill="#f6dc3c" stroke="#000" stroke-width="1.6"/>
<circle cx="577" cy="476" r="8.6" fill="#f6dc3c" stroke="#000" stroke-width="1.6"/>
<circle cx="970.6" cy="417" r="8.6" fill="#f6dc3c" stroke="#000" stroke-width="1.6"/>
<circle cx="963.2" cy="566.8" r="8.6" fill="#f6dc3c" stroke="#000" stroke-width="1.6"/>
<circle cx="695.5" cy="647" r="8.6" fill="#cc0a0a" stroke="#000" stroke-width="1.6"/>
<circle cx="898.5" cy="758" r="8.6" fill="#cc0a0a" stroke="#000" stroke-width="1.6"/>
<circle cx="1071.6" cy="699" r="8.6" fill="#cc0a0a" stroke="#000" stroke-width="1.6"/>
<polygon points="568.7,334.4 534.4,339.5 546.5,346.5 523.0,354.4 555.7,349.3 546.5,342.7" fill="#ee1010" stroke="#000" stroke-width="1.3" stroke-linejoin="miter"/>
<g fill="none" stroke="#000" stroke-width="1.4"><circle cx="1022.1" cy="740.4" r="6"/><path d="M1022.1 746.5v12.5M1015.4 753.5h13.4M1015.7 765.3l6.4-6.3 6.7 6.3"/></g>
<g fill="none" stroke="#000" stroke-width="1.1"><circle cx="860.8" cy="789" r="2.6"/><path d="M860.8 791.6v4.5M857.8 793.6h6M857.8 799.5l3-3.4 3 3.4"/></g>
<rect x="656.2" y="697.3" width="5.5" height="5.5" fill="#6a9ccc" stroke="#d4ecff" stroke-width="0.8"/>
<rect x="656.2" y="710.1" width="5.5" height="5.5" fill="#6a9ccc" stroke="#d4ecff" stroke-width="0.8"/>
<rect x="656.2" y="724.5" width="5.5" height="5.5" fill="#6a9ccc" stroke="#d4ecff" stroke-width="0.8"/>
<rect x="696.4" y="697.3" width="5.5" height="5.5" fill="#6a9ccc" stroke="#d4ecff" stroke-width="0.8"/>
<rect x="696.4" y="724.5" width="5.5" height="5.5" fill="#6a9ccc" stroke="#d4ecff" stroke-width="0.8"/>
<rect x="736.1" y="697.3" width="5.5" height="5.5" fill="#6a9ccc" stroke="#d4ecff" stroke-width="0.8"/>
<rect x="736.1" y="710.1" width="5.5" height="5.5" fill="#6a9ccc" stroke="#d4ecff" stroke-width="0.8"/>
<rect x="736.1" y="724.5" width="5.5" height="5.5" fill="#6a9ccc" stroke="#d4ecff" stroke-width="0.8"/>
<g font-family="Liberation Sans" font-size="13" fill="#111" text-anchor="middle"><text x="808.1" y="151.2" transform="matrix(1 0 0 1.06 0 -9.07)">Configuration du trafic aérien</text><text x="813" y="168.2" transform="matrix(1 0 0 1.06 0 -10.09)">optimal</text><text x="508.5" y="307.5" transform="matrix(1 0 0 1.06 0 -18.45)">La route la plus directe choisie</text><text x="583.5" y="391.5" transform="matrix(1 0 0 1.06 0 -23.49)">Séparation des trajectoires</text><text x="585.5" y="409.7" transform="matrix(1 0 0 1.06 0 -24.58)">suffisante</text><text x="1174.8" y="286.0" transform="matrix(1 0 0 1.06 0 -17.16)">Pas de changement</text><text x="1174.5" y="303.7" transform="matrix(1 0 0 1.06 0 -18.22)">de route inutile</text><text x="975" y="360.5" transform="matrix(1 0 0 1.06 0 -21.63)">Trafic aérien monitoré</text><text x="797.9" y="452.5" transform="matrix(1 0 0 1.06 0 -27.15)">Secteur monitorable</text><text x="1133.3" y="448.0" transform="matrix(1 0 0 1.06 0 -26.88)">Situation toujours</text><text x="1136.9" y="466.2" transform="matrix(1 0 0 1.06 0 -27.97)">sous contrôle</text><text x="946.5" y="510.0" transform="matrix(1 0 0 1.06 0 -30.60)">Secteur monitoré</text><text x="457.8" y="501.5" transform="matrix(1 0 0 1.06 0 -30.09)">Conflits de</text><text x="459.1" y="519.7" transform="matrix(1 0 0 1.06 0 -31.18)">trajectoires prédits</text><text x="510" y="567.0" transform="matrix(1 0 0 1.06 0 -34.02)">Conflits prédits</text><text x="512.2" y="585.2" transform="matrix(1 0 0 1.06 0 -35.11)">analysés</text><text x="595.9" y="627.5" transform="matrix(1 0 0 1.06 0 -37.65)">Conflits prédits</text><text x="597.8" y="646.2" transform="matrix(1 0 0 1.06 0 -38.77)">résolus</text><text x="689.8" y="567.0" transform="matrix(1 0 0 1.06 0 -34.02)">Conflits non</text><text x="692.3" y="585.2" transform="matrix(1 0 0 1.06 0 -35.11)">prédits détectés</text><text x="1137.5" y="560.5" transform="matrix(1 0 0 1.06 0 -33.63)">Transition entre secteurs</text><text x="1138.1" y="577.7" transform="matrix(1 0 0 1.06 0 -34.66)">coordonnées</text><text x="814.5" y="629.0" transform="matrix(1 0 0 1.06 0 -37.74)">Bonne</text><text x="814.5" y="646.8" transform="matrix(1 0 0 1.06 0 -38.81)">coordination ATC</text><text x="1059.4" y="626.5" transform="matrix(1 0 0 1.06 0 -37.59)">Traversée de secteurs</text><text x="1059.6" y="644.7" transform="matrix(1 0 0 1.06 0 -38.68)">monitorée</text><text x="892.1" y="690.0" transform="matrix(1 0 0 1.06 0 -41.40)">Traversée de</text><text x="893.3" y="707.2" transform="matrix(1 0 0 1.06 0 -42.43)">secteurs planifiée</text><text x="698.4" y="719.0" transform="matrix(1 0 0 1.06 0 -43.14)">STCA</text><text x="1089.5" y="747.5" transform="matrix(1 0 0 1.06 0 -44.85)">Contrôleur</text><text x="1089.6" y="765.7" transform="matrix(1 0 0 1.06 0 -45.94)">tactique</text><text x="870.5" y="800" transform="matrix(1 0 0 1.06 0 -48)" text-anchor="start">Planificateur</text></g>
<g font-family="Liberation Sans" font-size="33" font-weight="bold" font-style="italic" fill="#fff"><text x="467" y="175">Editeur</text><text x="408.5" y="211">de diagrammes</text></g></svg><!-- DIAGRAM END -->
<!-- vertical scrollbar -->
<div class="a" style="left:1288px;top:115px;width:16px;height:708px;background:#cececd;border-left:1px solid #8a8a8a"></div>
<div class="a" style="left:1289px;top:116px;width:14px;height:14px;background:#d2d2d2;border:1px solid #fff;border-right-color:#8a8a8a;border-bottom-color:#8a8a8a"></div>
<svg class="a" style="left:1290px;top:118px" width="12" height="10"><path d="M1.5 7.5h9l-4.5-5z" fill="#000"/></svg>
<svg class="a" style="left:1287px;top:157px" width="16" height="580"><rect x="0" y="0" width="16" height="580" fill="#0a5aa0"/><rect x="1" y="1" width="14" height="578" fill="#b4dcff"/><rect x="2" y="2" width="13" height="577" fill="url(#thumb)"/></svg>
<div class="a" style="left:1289px;top:807px;width:14px;height:15px;background:#d2d2d2;border:1px solid #fff;border-right-color:#8a8a8a;border-bottom-color:#8a8a8a"></div>
<svg class="a" style="left:1290px;top:810px" width="12" height="10"><path d="M1.5 2.5h9l-4.5 5z" fill="#000"/></svg>
<!-- horizontal scrollbar -->
<div class="a" style="left:364px;top:823px;width:924px;height:16px;background:#cececd;border-top:1px solid #8a8a8a"></div>
<div class="a" style="left:365px;top:824px;width:15px;height:14px;background:#d2d2d2;border:1px solid #fff;border-right-color:#8a8a8a;border-bottom-color:#8a8a8a"></div>
<svg class="a" style="left:367px;top:825px" width="10" height="12"><path d="M7.5 1.5v9l-5-4.5z" fill="#000"/></svg>
<svg class="a" style="left:484px;top:823px" width="727" height="16"><rect x="0" y="0" width="727" height="16" fill="#0a5aa0"/><rect x="1" y="1" width="725" height="14" fill="#b4dcff"/><rect x="2" y="2" width="724" height="13" fill="url(#thumb)"/></svg>
<div class="a" style="left:1271px;top:824px;width:15px;height:14px;background:#d2d2d2;border:1px solid #fff;border-right-color:#8a8a8a;border-bottom-color:#8a8a8a"></div>
<svg class="a" style="left:1273px;top:825px" width="10" height="12"><path d="M2.5 1.5v9l5-4.5z" fill="#000"/></svg>

<!-- ===== TEXT FRAME ===== -->
<div class="a" style="left:358px;top:844px;width:951px;height:237px;background:#0664aa"></div>
<div class="a" style="left:373px;top:847px;width:922px;height:1px;background:#000"></div>
<div class="a" style="left:373px;top:848px;width:922px;height:1px;background:#5aa0d8"></div>
<div class="a" style="left:361px;top:860px;width:1px;height:210px;background:#000"></div>
<div class="a" style="left:362px;top:860px;width:1px;height:210px;background:#5aa0d8"></div>
<div class="a" style="left:1306px;top:862px;width:1px;height:208px;background:#000"></div>
<div class="a" style="left:1307px;top:862px;width:1px;height:208px;background:#5aa0d8"></div>
<div class="a" style="left:373px;top:1078px;width:922px;height:1px;background:#000"></div>
<div class="a" style="left:373px;top:1079px;width:922px;height:1px;background:#5aa0d8"></div>
<div class="a" style="left:358px;top:1081px;width:952px;height:1px;background:#a0a0a0"></div>
<div class="a" style="left:364px;top:850px;width:940px;height:225px;background:#cececd;border-radius:4px 4px 0 0"></div>
<div class="a" style="left:364px;top:850px;width:940px;height:26px;background:#a8d6f8;border-radius:4px 4px 0 0;border-bottom:1px solid #1462a8"></div>

<svg class="a" style="left:587px;top:853px" width="650" height="21"><rect width="650" height="21" fill="url(#gripB)"/></svg>
<svg class="a" style="left:368px;top:854px" width="18" height="18">
 <rect x="1" y="1" width="11.5" height="15" fill="#e8e8e8" stroke="#000"/>
 <path d="M3 4.5h7.5M6.75 4.5v8.5M4.5 13h4.5" stroke="#000" stroke-width="2"/>
 <path d="M12.5 15.5l3 .5-3 .8" stroke="#444" stroke-width="1.2"/>
</svg>
<div class="t" style="left:390px;top:856px;font-size:14px;color:#111">Buts (Text Explanation)  Alt-F3</div>
<svg class="a" style="left:1240px;top:852px" width="62" height="18">
 <rect x="1.5" y="8.5" width="6" height="6" fill="#fff" stroke="#0a3a70" stroke-width="2"/>
 <path d="M7 8l7-7M8 3v5h5" fill="none" stroke="#0a3a70" stroke-width="1.5"/>
 <rect x="19.5" y="7.5" width="8" height="8" fill="#fff" stroke="#0a3a70" stroke-width="2"/>
 <path d="M21 14l10-11M26 2h6v6" fill="none" stroke="#0a3a70" stroke-width="1.5"/>
 <rect x="45.5" y="1.5" width="13" height="13" fill="#a8d6f8" stroke="#0a3a70" stroke-width="2"/>
 <path d="M48.5 4.5l7 7M55.5 4.5l-7 7" stroke="#0a3a70" stroke-width="2"/>
</svg>
<!-- text toolbar -->
<div class="a" style="left:364px;top:876px;width:940px;height:1px;background:#8a8a8a"></div>
<svg class="a" style="left:364px;top:877px" width="80" height="26">
 <rect x="1.5" y="0.5" width="23" height="24" fill="#cececd" stroke="#9a9a9a"/>
 <rect x="27.5" y="0.5" width="23" height="24" fill="#cececd" stroke="#9a9a9a"/>
 <rect x="53.5" y="0.5" width="23" height="24" fill="#cececd" stroke="#9a9a9a"/>
 <circle cx="13" cy="13" r="10" fill="#c4d8a8" stroke="#a8b890" stroke-width=".8"/>
 <circle cx="39" cy="13" r="10" fill="#c4d8a8" stroke="#a8b890" stroke-width=".8"/>
 <circle cx="65" cy="13" r="10" fill="#c4d8a8" stroke="#a8b890" stroke-width=".8"/>
 <text x="13" y="21" font-family="Liberation Serif" font-weight="bold" font-size="21" text-anchor="middle" fill="#000">b</text>
 <text x="39" y="21" font-family="Liberation Serif" font-weight="bold" font-style="italic" font-size="21" text-anchor="middle" fill="#000">i</text>
 <text x="65" y="19" font-family="Liberation Serif" font-weight="bold" font-size="18" text-anchor="middle" fill="#000">u</text>
 <path d="M59 21.5h12" stroke="#000" stroke-width="1.5"/>
</svg>
<div class="a" style="left:443px;top:877px;width:762px;height:26px;background:#fff;border-bottom:1px solid #8a8a8a"></div>
<div class="t" style="left:444px;top:883px;font-size:14px;color:#000">default</div>
<div class="a" style="left:1204px;top:877px;width:27px;height:26px;background:#cececd;border:1px solid #fff;border-right-color:#8a8a8a;border-bottom-color:#8a8a8a"></div>
<svg class="a" style="left:1210px;top:886px" width="14" height="8"><path d="M0.5 0.5h12l-6 6z" fill="#000"/></svg>
<div class="a" style="left:1232px;top:877px;width:72px;height:26px;background:#cececd;border:1px solid #fff;border-right-color:#8a8a8a;border-bottom-color:#8a8a8a"></div>
<div class="t" style="left:1249px;top:883px;font-size:14px;color:#111">Styles</div>
<!-- text area -->
<div class="a" style="left:364px;top:904px;width:940px;height:1px;background:#8a8a8a"></div>
<div class="a" style="left:364px;top:905px;width:924px;height:143px;background:#fff;border-left:1px solid #6a6a6a"></div>
<div class="a" style="left:1288px;top:905px;width:16px;height:143px;background:#cececd;border-left:1px solid #8a8a8a"></div>
<div class="a" style="left:1289px;top:906px;width:14px;height:15px;background:#d2d2d2;border:1px solid #fff;border-right-color:#8a8a8a;border-bottom-color:#8a8a8a"></div>
<svg class="a" style="left:1290px;top:909px" width="12" height="10"><path d="M1.5 7.5h9l-4.5-5z" fill="#000"/></svg>
<svg class="a" style="left:1287px;top:922px" width="16" height="101"><rect x="0" y="0" width="16" height="101" fill="#0a5aa0"/><rect x="1" y="1" width="14" height="99" fill="#b4dcff"/><rect x="2" y="2" width="13" height="98" fill="url(#thumb)"/></svg>
<div class="a" style="left:1289px;top:1033px;width:14px;height:14px;background:#d2d2d2;border:1px solid #fff;border-right-color:#8a8a8a;border-bottom-color:#8a8a8a"></div>
<svg class="a" style="left:1290px;top:1035px" width="12" height="10"><path d="M1.5 2.5h9l-4.5 5z" fill="#000"/></svg>
<div class="a" style="left:364px;top:1048px;width:940px;height:1px;background:#8a8a8a"></div>
<div class="t" style="left:368px;top:910px;font-size:12.4px;color:#000;line-height:16px">Une configuration optimale du trafic aérien repose sur les éléments suivants:
-- la route la plus directe doit être choisie
-- une séparation suffisante entre les trajectoires doit être garantie par le contrôle aérien. Cela implique
   --- une prédiction des conflist de trajectoires
   --- une analyse de ces conflits
   --- une résolution de ces conflits
   ---  une résolution des conflits qui surviennent et qui n'ont pas été prédits ; c'est précisément un des rôle du système d'alerte des conflits de trajectoire à court terme
(<b style="text-decoration:underline;letter-spacing:-0.8px">STCA</b>).</div>
<svg class="a" style="left:1040px;top:910px" width="200" height="90"><g font-family="Liberation Sans" font-size="33" font-weight="bold" font-style="italic" fill="#f26b2b"><text x="23" y="41.7">Editeur</text><text x="16" y="78.7">de textes</text></g></svg>
<!-- buttons -->
<div class="a" style="left:364px;top:1050px;width:249px;height:25px;border:1px solid #a4a4a4;background:#cececd"></div>
<div class="t" style="left:448px;top:1057px;font-size:14px;color:#9c9c9c">Nouveau concept</div>
<svg class="a" style="left:420px;top:1051px" width="26" height="24"><g fill="#a0a0a0"><circle cx="15" cy="7" r="5"/><circle cx="10" cy="14" r="4"/><rect x="2" y="15" width="8" height="7"/><circle cx="17" cy="18" r="4"/></g><path d="M5 18l9-8" stroke="#888" stroke-width="2"/></svg>
<div class="a" style="left:1054px;top:1050px;width:249px;height:25px;border:1px solid #a4a4a4;background:#cececd"></div>
<div class="t" style="left:1160px;top:1057px;font-size:14px;color:#9c9c9c">Référence</div>
<svg class="a" style="left:1132px;top:1051px" width="26" height="24"><g fill="#a0a0a0"><circle cx="15" cy="7" r="5"/><circle cx="10" cy="14" r="4"/><rect x="2" y="15" width="8" height="7"/><circle cx="17" cy="18" r="4"/></g><path d="M5 18l9-8" stroke="#888" stroke-width="2"/></svg>
<!-- splitter bottom -->
<svg class="a" style="left:360px;top:1084px" width="24" height="9"><path d="M1 7l4-5 4 5z" fill="#1a6ab0"/><path d="M13 2l4 5 4-5z" fill="#1a6ab0"/></svg>
<div class="a" style="left:358px;top:1083px;width:952px;height:1px;background:#fff"></div><svg class="a" style="left:385px;top:1087px" width="922" height="4"><rect width="922" height="4" fill="url(#gripG)"/></svg>
<div class="a" style="left:358px;top:1092px;width:952px;height:1px;background:#8c8c8c"></div>
<div class="a" style="left:9px;top:1094px;width:1301px;height:1px;background:#fff"></div>

<!-- ===== STATUS BAR ===== -->
<div class="a" style="left:11px;top:1098px;width:1090px;height:18px;border:1px solid #1a64a8"></div>
<div class="t" style="left:396px;top:1101px;font-size:14px;color:#1a64a8">HTML publié dans C:\Respect-IT\Website\Webdoc\</div>
<div class="a" style="left:1105px;top:1098px;width:80px;height:18px;border:1px solid #1a64a8"></div>
<div class="t" style="left:1123px;top:1101px;font-size:14px;color:#1a64a8">Modifié</div>
<div class="a" style="left:1189px;top:1098px;width:100px;height:18px;border:1px solid #1a64a8;background:linear-gradient(90deg,#1a64a8 64px,transparent 64px)"></div>
<div class="t" style="left:1202px;top:1101px;font-size:14px;color:#1a64a8">46M of 72M</div>
<div class="a" style="left:1189px;top:1098px;width:64px;height:18px;overflow:hidden"><div class="t" style="left:13px;top:3px;font-size:14px;color:#e8f0f8">46M of 72M</div></div>
<svg class="a" style="left:1290px;top:1097px" width="20" height="20">
 <rect x="5" y="2" width="3" height="3" fill="#30c040" stroke="#000" stroke-width=".8"/><path d="M6.5 5v2" stroke="#000" stroke-width="1.2"/>
 <path d="M2 11v-2.5l1.5-1.5h7l1.5 1.5v2.5z" fill="#e8f8e0" stroke="#000" stroke-width="1.3"/>
 <path d="M3.5 8.5h7M4 10.2h1M6 10.2h1M8 10.2h1" stroke="#30b040" stroke-width="1"/>
 <rect x="2" y="11" width="10" height="3" fill="#f0e890" stroke="#000" stroke-width="1.2"/>
 <path d="M12 11.5h3.5" stroke="#000" stroke-width="1.5"/><circle cx="16" cy="11.5" r="1.3" fill="#d8b040" stroke="#000" stroke-width=".6"/>
 <path d="M3 14v3M5 14v3M7 14v3M9 14v3M11 14v3" stroke="#000" stroke-width="1.1"/>
 <path d="M2.5 18.3h1M4.5 18.3h1M6.5 18.3h1M8.5 18.3h1M11 18.3h1M13 18.3l1.5-1.5" stroke="#000" stroke-width="1"/>
</svg>
</body></html>
